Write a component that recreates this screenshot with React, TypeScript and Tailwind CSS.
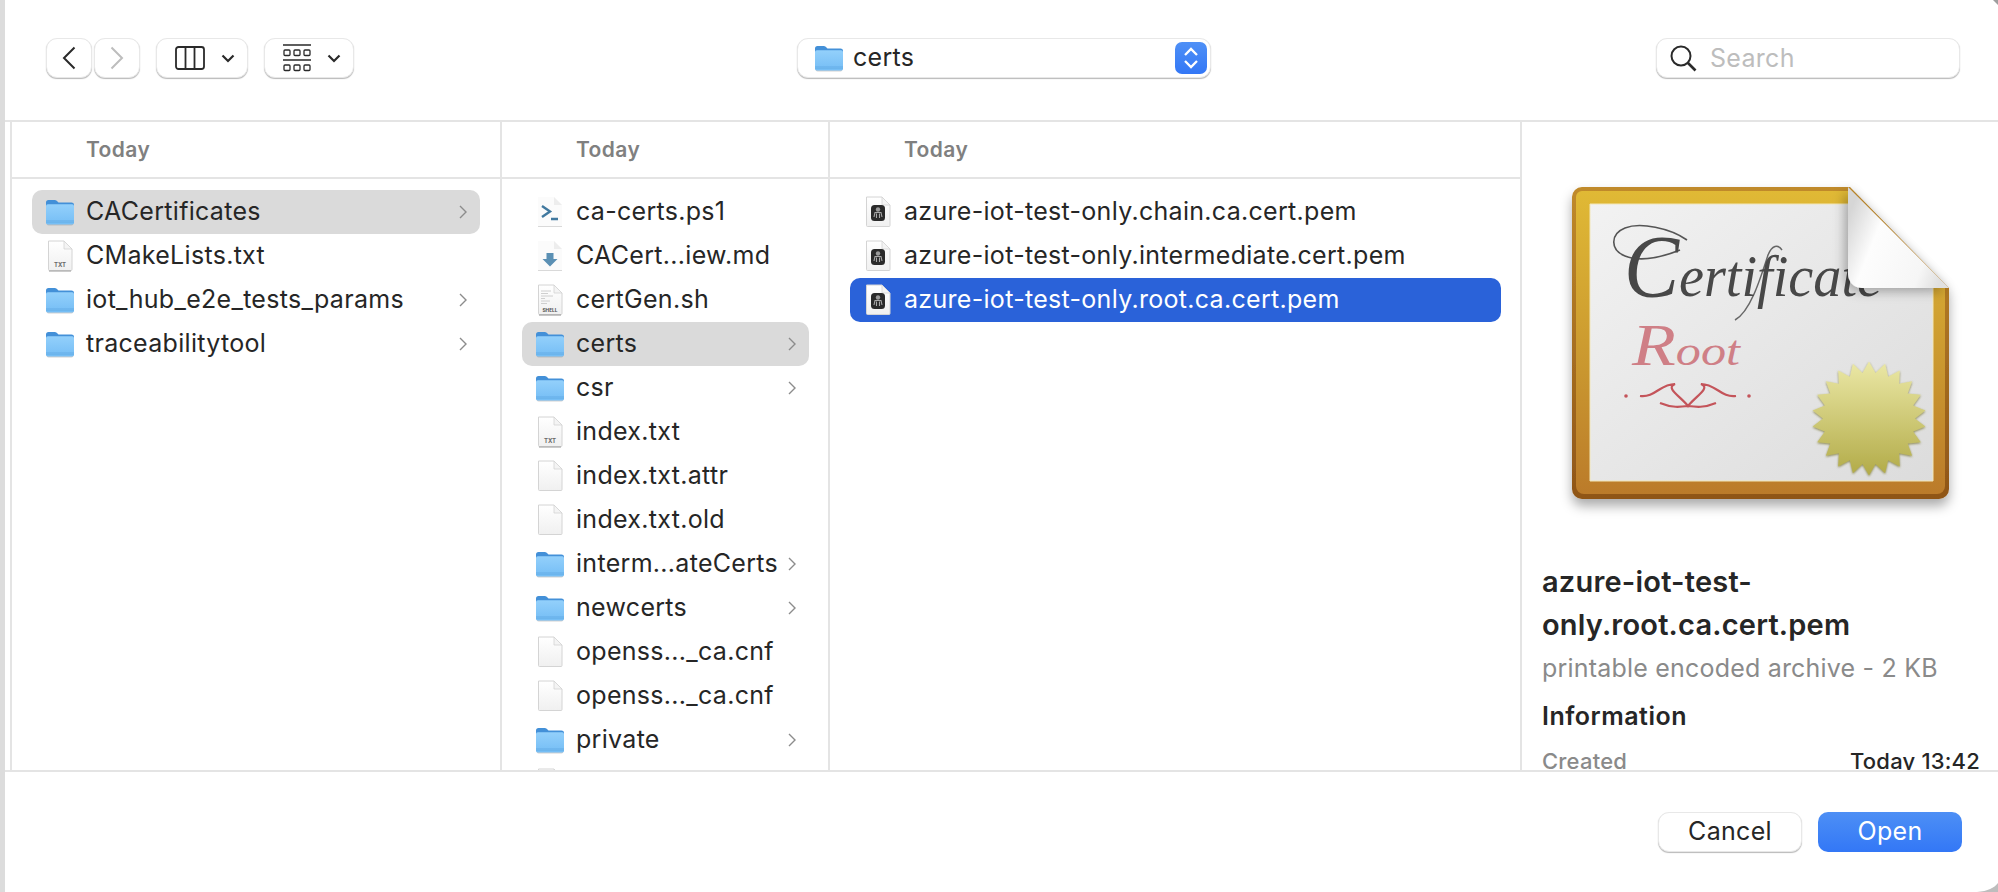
import React from "react";

const FONT = "font-['Inter','Liberation_Sans',sans-serif]";

function Folder({ id = "f" }: { id?: string }) {
  return (
    <svg width="28" height="28" viewBox="0 0 28 28" className="shrink-0">
      <defs>
        <linearGradient id={id} x1="0" y1="0" x2="0" y2="1">
          <stop offset="0" stopColor="#93d0fb" />
          <stop offset="1" stopColor="#74bdf5" />
        </linearGradient>
      </defs>
      <rect x="0.5" y="8" width="27" height="19.5" rx="2" fill="#9a9a9a" opacity="0.45" />
      <path d="M0 4.5A2.5 2.5 0 0 1 2.5 2h6.2c.8 0 1.4.3 2 .8L12.5 4.4H25.5A2.5 2.5 0 0 1 28 7v6H0z" fill="#4390d8" />
      <rect x="0" y="6.2" width="28" height="20.3" rx="1.8" fill={`url(#${id})`} />
      <rect x="0" y="22.6" width="28" height="0.8" fill="#5fa9e3" />
      <rect x="0" y="24.4" width="28" height="0.6" fill="#66afe7" />
    </svg>
  );
}

function Doc({ kind }: { kind: "blank" | "txt" | "shell" | "ps" | "md" | "cert" }) {
  const light = kind === "ps" || kind === "md";
  return (
    <svg width="28" height="32" viewBox="0 0 28 32" className="shrink-0">
      <defs>
        <linearGradient id={`d${kind}`} x1="0" y1="0" x2="0" y2="1">
          <stop offset="0" stopColor="#ffffff" />
          <stop offset="1" stopColor="#f0f0f0" />
        </linearGradient>
      </defs>
      {light ? (
        <>
          <path d="M2 1H18L26 9V30H2Z" fill="#fbfbfb" />
          <path d="M18 1V9H26Z" fill="#ededed" />
          <path d="M2 30.5H26" stroke="#d9d9d9" strokeWidth="1" />
        </>
      ) : (
        <>
          <path d="M2.5 1H18L26 9V29.5A1 1 0 0 1 25 30.5H3.5A1 1 0 0 1 2.5 29.5Z" fill={`url(#d${kind})`} stroke="#d4d4d4" strokeWidth="1" />
          <path d="M18 1V9H26Z" fill="#f4f4f4" stroke="#d4d4d4" strokeWidth="0.8" />
        </>
      )}
      {kind === "txt" && (
        <>
          <path d="M3 31H25" stroke="#a8a8a8" strokeWidth="1.2" />
          <text x="14" y="27" textAnchor="middle" fontSize="6" fontWeight="700" fill="#6a6a6a" fontFamily="Inter">TXT</text>
        </>
      )}
      {kind === "shell" && (
        <>
          <path d="M5 7H15M5 9.5H12M5 12H17M5 14.5H9M5 17H14M5 19.5H11" stroke="#c4c4c4" strokeWidth="0.8" />
          <path d="M3 31H25" stroke="#a0a0a0" strokeWidth="1.2" />
          <text x="14" y="27.5" textAnchor="middle" fontSize="4.8" fontWeight="700" fill="#505050" fontFamily="Inter">SHELL</text>
        </>
      )}
      {kind === "ps" && <path d="M6 10L14 15.5L6 21M15 23H22" fill="none" stroke="#41799f" strokeWidth="2.4" />}
      {kind === "md" && <path d="M10.5 13H17.5V19H21.5L14 26.5L6.5 19H10.5Z" fill="#5b90b4" />}
      {kind === "cert" && (
        <>
          <rect x="7" y="9" width="14" height="16" rx="3.5" fill="#2a2a2a" />
          <circle cx="14" cy="13.5" r="2.2" fill="#9a9a9a" />
          <path d="M10 21L11 16.5H17L18 21M12.5 22V17.5M15.5 22V17.5" fill="none" stroke="#a8a8a8" strokeWidth="1.1" />
        </>
      )}
    </svg>
  );
}

function Chev() {
  return (
    <svg width="8" height="14" viewBox="0 0 8 14" className="shrink-0">
      <path d="M1 1L7 7L1 13" fill="none" stroke="#8c8c8c" strokeWidth="1.4" />
    </svg>
  );
}

type Item = { name: string; icon: "folder" | "blank" | "txt" | "shell" | "ps" | "md" | "cert"; state?: "grey" | "blue" };

function Row({ item, id }: { item: Item; id: string }) {
  const bg = item.state === "grey" ? "bg-[#dadada] text-[#262626]" : item.state === "blue" ? "bg-[#2a62d9] text-white" : "text-[#262626]";
  return (
    <div className={`flex h-[44px] items-center rounded-[10px] pl-[14px] pr-[13px] ${bg}`}>
      {item.icon === "folder" ? <Folder id={id} /> : <Doc kind={item.icon} />}
      <span className="ml-[12px] flex-1 whitespace-nowrap text-[25px] tracking-[0.3px]">{item.name}</span>
      {item.icon === "folder" && <Chev />}
    </div>
  );
}

function Column({ items, className, pad, today, id }: { items: Item[]; className: string; pad: string; today: string; id: string }) {
  return (
    <div className={`flex h-full flex-col overflow-hidden border-r-2 border-[#e4e4e4] ${className}`}>
      <div className={`flex h-[57px] shrink-0 items-center border-b-2 border-[#e4e4e4] text-[21px] font-semibold tracking-[0.4px] text-[#808080] ${today}`}>Today</div>
      <div className={`pt-[11px] ${pad}`}>
        {items.map((it, i) => (
          <Row key={i} item={it} id={`${id}${i}`} />
        ))}
      </div>
    </div>
  );
}

const col1: Item[] = [
  { name: "CACertificates", icon: "folder", state: "grey" },
  { name: "CMakeLists.txt", icon: "txt" },
  { name: "iot_hub_e2e_tests_params", icon: "folder" },
  { name: "traceabilitytool", icon: "folder" },
];
const col2: Item[] = [
  { name: "ca-certs.ps1", icon: "ps" },
  { name: "CACert...iew.md", icon: "md" },
  { name: "certGen.sh", icon: "shell" },
  { name: "certs", icon: "folder", state: "grey" },
  { name: "csr", icon: "folder" },
  { name: "index.txt", icon: "txt" },
  { name: "index.txt.attr", icon: "blank" },
  { name: "index.txt.old", icon: "blank" },
  { name: "interm...ateCerts", icon: "folder" },
  { name: "newcerts", icon: "folder" },
  { name: "openss..._ca.cnf", icon: "blank" },
  { name: "openss..._ca.cnf", icon: "blank" },
  { name: "private", icon: "folder" },
  { name: "", icon: "blank" },
];
const col3: Item[] = [
  { name: "azure-iot-test-only.chain.ca.cert.pem", icon: "cert" },
  { name: "azure-iot-test-only.intermediate.cert.pem", icon: "cert" },
  { name: "azure-iot-test-only.root.ca.cert.pem", icon: "cert", state: "blue" },
];

function star(cx: number, cy: number, R: number, r: number, n: number) {
  const p: string[] = [];
  for (let i = 0; i < n * 2; i++) {
    const a = (Math.PI * i) / n - Math.PI / 2;
    const rad = i % 2 === 0 ? R : r;
    p.push(`${(cx + rad * Math.cos(a)).toFixed(1)},${(cy + rad * Math.sin(a)).toFixed(1)}`);
  }
  return p.join(" ");
}

function Certificate() {
  return (
    <svg width="410" height="345" viewBox="1560 175 410 345" className="block">
      <defs>
        <linearGradient id="frameOut" x1="0" y1="0" x2="0" y2="1">
          <stop offset="0" stopColor="#c08a2a" />
          <stop offset="1" stopColor="#8f5518" />
        </linearGradient>
        <linearGradient id="frame" x1="0" y1="0" x2="0" y2="1">
          <stop offset="0" stopColor="#e0b935" />
          <stop offset="0.6" stopColor="#c9962f" />
          <stop offset="1" stopColor="#bb7b2a" />
        </linearGradient>
        <linearGradient id="paper" x1="0" y1="0" x2="1" y2="1">
          <stop offset="0" stopColor="#f2f2f2" />
          <stop offset="1" stopColor="#dcdcdc" />
        </linearGradient>
        <linearGradient id="seal" x1="0" y1="0" x2="0" y2="1">
          <stop offset="0" stopColor="#ebe8a6" />
          <stop offset="1" stopColor="#b2ab48" />
        </linearGradient>
        <linearGradient id="fold" x1="0" y1="0.3" x2="1" y2="0.7">
          <stop offset="0" stopColor="#d6d6d6" />
          <stop offset="0.3" stopColor="#fdfdfd" />
          <stop offset="0.8" stopColor="#f6f6f6" />
          <stop offset="1" stopColor="#e0e0e0" />
        </linearGradient>
        <filter id="sh" x="-10%" y="-10%" width="120%" height="125%">
          <feDropShadow dx="0" dy="7" stdDeviation="6" floodColor="#000" floodOpacity="0.33" />
        </filter>
        <filter id="sh2" x="-30%" y="-30%" width="160%" height="160%">
          <feDropShadow dx="-3" dy="3" stdDeviation="6" floodColor="#000" floodOpacity="0.32" />
        </filter>
        <filter id="sh3" x="-10%" y="-10%" width="120%" height="120%">
          <feDropShadow dx="0" dy="1" stdDeviation="1" floodColor="#6e6a20" floodOpacity="0.75" />
        </filter>
      </defs>
      <path d="M1582 187H1850L1949 288V489A10 10 0 0 1 1939 499H1582A10 10 0 0 1 1572 489V197A10 10 0 0 1 1582 187Z" fill="url(#frameOut)" filter="url(#sh)" />
      <path d="M1582 191H1850L1945 288V486A8 8 0 0 1 1937 494H1584A8 8 0 0 1 1576 486V197A6 6 0 0 1 1582 191Z" fill="url(#frame)" />
      <path d="M1590 204H1862L1933 276V481H1590Z" fill="url(#paper)" stroke="#f2e6b8" strokeWidth="1" />
      <path d="M1687 240C1670 228 1640 222 1625 228C1610 234 1610 250 1625 256C1640 262 1660 258 1680 250" fill="none" stroke="#555" strokeWidth="1.6" />
      <path d="M1735 320C1750 312 1760 280 1768 255C1772 245 1778 244 1782 250" fill="none" stroke="#666" strokeWidth="1.5" />
      <text x="1624" y="296" fontFamily="'Liberation Serif',serif" fontStyle="italic" fill="#484848" textLength="258" lengthAdjust="spacingAndGlyphs">
        <tspan fontSize="88">C</tspan>
        <tspan fontSize="60">ertificate</tspan>
      </text>
      <text x="1632" y="365" fontFamily="'Liberation Serif',serif" fontStyle="italic" fill="#cf7f86" textLength="108" lengthAdjust="spacingAndGlyphs">
        <tspan fontSize="60">R</tspan>
        <tspan fontSize="42">oot</tspan>
      </text>
      <g fill="none" stroke="#c4545a" strokeWidth="2.2">
        <path d="M1640 396C1655 398 1660 384 1675 384C1665 388 1680 396 1688 406C1696 396 1711 388 1701 384C1716 384 1721 398 1736 396" />
        <path d="M1660 403C1672 408 1680 407 1688 406C1696 407 1704 408 1716 403" />
      </g>
      <circle cx="1626" cy="396" r="1.8" fill="#c4545a" />
      <circle cx="1749" cy="396" r="1.8" fill="#c4545a" />
      <polygon points={star(1869, 418.5, 57, 46, 22)} fill="url(#seal)" filter="url(#sh3)" />
      <path d="M1848 187L1949 288H1862A14 14 0 0 1 1848 274Z" fill="url(#fold)" filter="url(#sh2)" />
    </svg>
  );
}

function Btn({ className, children }: { className: string; children: React.ReactNode }) {
  return (
    <div className={`flex h-[40px] items-center justify-center rounded-[11px] border border-[#e8e8e8] bg-white shadow-[0_1px_1px_rgba(0,0,0,0.28)] ${className}`}>
      {children}
    </div>
  );
}

function SmallChev() {
  return (
    <svg width="14" height="9" viewBox="0 0 14 9">
      <path d="M1.5 1.5L7 7L12.5 1.5" fill="none" stroke="#2a2a2a" strokeWidth="2.2" />
    </svg>
  );
}

export default function App() {
  return (
    <div className={`relative flex h-[892px] w-[1998px] overflow-hidden bg-white ${FONT}`}>
      <div className="w-[5px] shrink-0 bg-[#dcdcdc]" />
      <div className="flex min-w-0 flex-1 flex-col">
        <div className="flex h-[122px] shrink-0 items-start border-b-2 border-[#e4e4e4] pl-[41px] pt-[38px]">
          <Btn className="w-[46px]">
            <svg width="14" height="24" viewBox="0 0 14 24"><path d="M12.5 1.5L2 12L12.5 22.5" fill="none" stroke="#2a2a2a" strokeWidth="2" /></svg>
          </Btn>
          <Btn className="ml-[2px] w-[46px]">
            <svg width="14" height="24" viewBox="0 0 14 24"><path d="M1.5 1.5L12 12L1.5 22.5" fill="none" stroke="#bdbdbd" strokeWidth="2" /></svg>
          </Btn>
          <Btn className="ml-[16px] w-[92px] gap-[16px] pl-[5px]">
            <svg width="30" height="24" viewBox="0 0 30 24">
              <rect x="1" y="1" width="28" height="22" rx="2.5" fill="none" stroke="#2a2a2a" strokeWidth="1.8" />
              <path d="M10.5 1V23M19.5 1V23" stroke="#2a2a2a" strokeWidth="1.8" />
            </svg>
            <SmallChev />
          </Btn>
          <Btn className="ml-[16px] w-[90px] gap-[16px] pl-[5px]">
            <svg width="28" height="28" viewBox="0 0 28 28">
              <path d="M0 1H28M0 16H28" stroke="#2a2a2a" strokeWidth="1.5" />
              <g fill="none" stroke="#2a2a2a" strokeWidth="1.3">
                <rect x="1" y="6" width="6" height="5.5" rx="1" />
                <rect x="11" y="6" width="6" height="5.5" rx="1" />
                <rect x="21" y="6" width="6" height="5.5" rx="1" />
                <rect x="1" y="21" width="6" height="5.5" rx="1" />
                <rect x="11" y="21" width="6" height="5.5" rx="1" />
                <rect x="21" y="21" width="6" height="5.5" rx="1" />
              </g>
            </svg>
            <SmallChev />
          </Btn>
          <Btn className="ml-[443px] w-[414px] justify-start pl-[17px] pr-[3px]">
            <Folder id="pop" />
            <span className="ml-[10px] flex-1 text-[25px] tracking-[0.3px] text-[#262626]">certs</span>
            <div className="flex h-[32px] w-[32px] items-center justify-center rounded-[7px] bg-gradient-to-b from-[#4f90f6] to-[#3377f6]">
              <svg width="16" height="24" viewBox="0 0 16 24">
                <path d="M2 9L8 3L14 9M2 15L8 21L14 15" fill="none" stroke="#fff" strokeWidth="2.3" />
              </svg>
            </div>
          </Btn>
          <Btn className="ml-[445px] w-[304px] justify-start pl-[13px]">
            <svg width="27" height="27" viewBox="0 0 27 27">
              <circle cx="11" cy="11" r="9.5" fill="none" stroke="#2a2a2a" strokeWidth="2" />
              <path d="M18 18L25.5 25.5" stroke="#2a2a2a" strokeWidth="2.6" />
            </svg>
            <span className="ml-[13px] translate-y-[1px] text-[25px] tracking-[0.3px] text-[#bdbdbd]">Search</span>
          </Btn>
        </div>

        <div className="flex h-[648px] shrink-0 overflow-hidden">
          <div className="w-[5px] shrink-0" />
          <Column items={col1} id="a" className="w-[492px] shrink-0 border-l-2" pad="pl-[20px] pr-[20px]" today="pl-[74px]" />
          <Column items={col2} id="b" className="w-[328px] shrink-0" pad="pl-[20px] pr-[19px]" today="pl-[74px]" />
          <Column items={col3} id="c" className="w-[692px] shrink-0" pad="pl-[20px] pr-[19px]" today="pl-[74px]" />
          <div className="flex min-w-0 flex-1 flex-col pl-[20px] pr-[18px]">
            <div className="-ml-[5px] mt-[53px] shrink-0 [&>svg]:ml-[23px]">
              <Certificate />
            </div>
            <div className="mt-[40px] text-[29px] font-semibold leading-[43px] tracking-[0.2px] text-[#262626]">
              azure-iot-test-
              <br />
              only.root.ca.cert.pem
            </div>
            <div className="mt-[1px] whitespace-nowrap text-[25px] leading-[42px] tracking-[0.2px] text-[#8a8a8a]">printable encoded archive - 2 KB</div>
            <div className="mt-[6px] text-[25px] font-semibold leading-[42px] tracking-[0.5px] text-[#262626]">Information</div>
            <div className="mt-[6px] flex items-center justify-between text-[22px] leading-[36px] tracking-[0.2px]">
              <span className="font-medium text-[#8a8a8a]">Created</span>
              <span className="font-medium text-[#262626]">Today 13:42</span>
            </div>
          </div>
        </div>

        <div className="flex flex-1 items-start justify-end border-t-2 border-[#e4e4e4] pr-[36px] pt-[40px]">
          <Btn className="w-[144px] text-[25px] tracking-[0.3px] text-[#262626]">Cancel</Btn>
          <div className="ml-[16px] flex h-[40px] w-[144px] items-center justify-center rounded-[10px] bg-gradient-to-b from-[#4d8ff5] to-[#3377f6] text-[25px] tracking-[0.3px] text-white">Open</div>
        </div>
      </div>
      <svg width="22" height="10" viewBox="0 0 22 10" className="absolute bottom-0 right-0">
        <path d="M22 1C18 6 12 9 1 10H22Z" fill="#bdbdbd" />
      </svg>
      <svg width="6" height="6" viewBox="0 0 6 6" className="absolute right-0 top-0">
        <path d="M1 0H6V5Z" fill="#9e9e9e" />
      </svg>
    </div>
  );
}
